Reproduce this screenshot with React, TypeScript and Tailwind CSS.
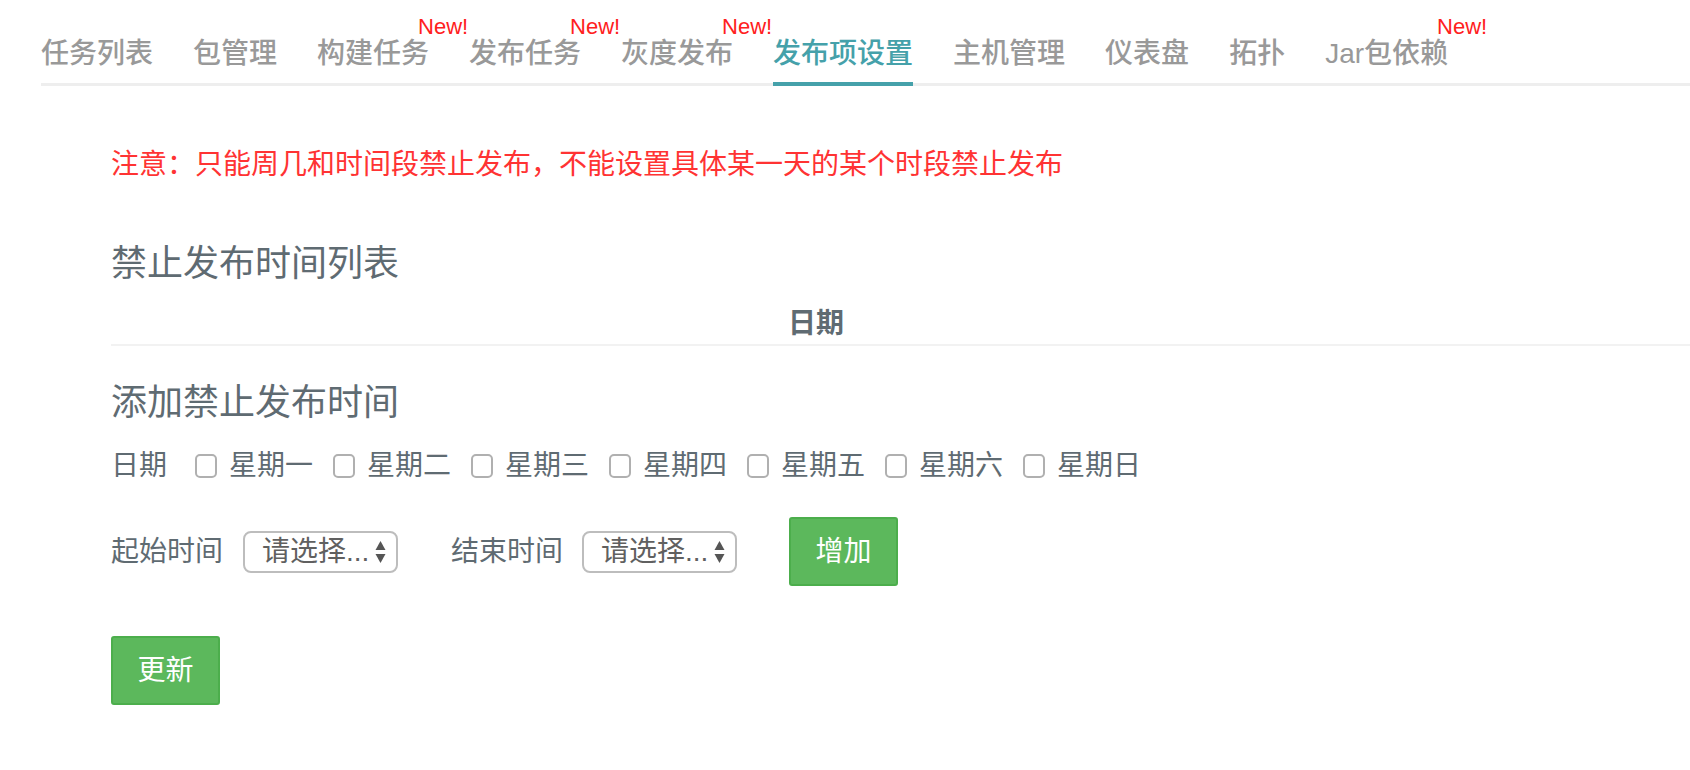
import React from "react"

const tabs = [
  { label: "任务列表" },
  { label: "包管理" },
  { label: "构建任务", isNew: true },
  { label: "发布任务", isNew: true },
  { label: "灰度发布", isNew: true },
  { label: "发布项设置", active: true },
  { label: "主机管理" },
  { label: "仪表盘" },
  { label: "拓扑" },
  { label: "Jar包依赖", isNew: true },
]

const days = ["星期一", "星期二", "星期三", "星期四", "星期五", "星期六", "星期日"]

function SelectBox() {
  return (
    <div className="flex items-center w-[155px] h-[42px] pl-[17px] pr-[10px] border-2 border-[#bdbdbd] rounded-[8px] bg-white text-[#606060] text-[28px] leading-none">
      <span className="flex-1">请选择...</span>
      <svg width="11" height="24" viewBox="0 0 11 24">
        <path d="M5.5 1 L10.5 10 L0.5 10 Z" fill="#555" />
        <path d="M5.5 23 L10.5 14 L0.5 14 Z" fill="#555" />
      </svg>
    </div>
  )
}

function GreenButton({ children }: { children: React.ReactNode }) {
  return (
    <button className="w-[109px] h-[69px] bg-[#5cb85c] border-2 border-[#4cae4c] rounded-[3px] text-white text-[28px] leading-none">
      {children}
    </button>
  )
}

export default function App() {
  return (
    <div
      className="w-[1690px] h-[770px] bg-white overflow-hidden"
      style={{ fontFamily: '"Liberation Sans", "Noto Sans CJK SC", sans-serif' }}
    >
      {/* Tabs */}
      <ul className="flex ml-[41px] border-b-[3px] border-[#eeeeee]">
        {tabs.map((t) => (
          <li
            key={t.label}
            className={`relative mr-[40px] pt-[34px] pb-[8px] -mb-[3px] border-b-4 text-[28px] leading-[40px] font-medium ${
              t.active ? "border-[#45a1aa] text-[#45a1aa]" : "border-transparent text-[#999999]"
            }`}
          >
            {t.label}
            {t.isNew && (
              <span className="absolute left-[calc(100%-11px)] top-[16px] text-[22px] leading-none font-normal text-[#ff2020] whitespace-nowrap">
                New!
              </span>
            )}
          </li>
        ))}
      </ul>

      <div className="pl-[111px]">
        {/* Note */}
        <p className="mt-[59px] text-[28px] leading-[40px] text-[#ff3333]">
          注意：只能周几和时间段禁止发布，不能设置具体某一天的某个时段禁止发布
        </p>

        {/* Forbidden list */}
        <h4 className="mt-[59px] text-[36px] leading-[40px] text-[#5f6b72]">禁止发布时间列表</h4>
        <div className="mt-[20px] flex border-b-2 border-[#f2f2f2]">
          <div className="w-[1410px] text-center text-[28px] leading-[40px] font-bold text-[#5f6b72]">日期</div>
          <div className="flex-1" />
        </div>

        {/* Add */}
        <h4 className="mt-[37px] text-[36px] leading-[40px] text-[#5f6b72]">添加禁止发布时间</h4>
        <div className="mt-[23px] flex items-center text-[28px] leading-[40px] text-[#5f6b72]">
          <span className="mr-[28px]">日期</span>
          {days.map((d) => (
            <label key={d} className="flex items-center mr-[20px]">
              <span className="w-[22px] h-[24px] border-2 border-[#b0b0b0] rounded-[5px] bg-white mr-[12px]" />
              {d}
            </label>
          ))}
        </div>

        <div className="mt-[31px] flex items-center text-[28px] leading-[40px] text-[#5f6b72]">
          <span className="mr-[20px]">起始时间</span>
          <SelectBox />
          <span className="ml-[53px] mr-[19px]">结束时间</span>
          <SelectBox />
          <div className="ml-[52px]">
            <GreenButton>增加</GreenButton>
          </div>
        </div>

        <div className="mt-[50px]">
          <GreenButton>更新</GreenButton>
        </div>
      </div>
    </div>
  )
}
